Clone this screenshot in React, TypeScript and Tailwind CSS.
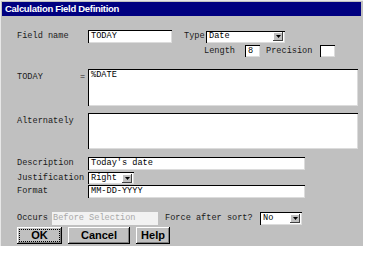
import React from "react";

const mono = { fontFamily: '"Liberation Mono", "Courier New", monospace' };
const sans = { fontFamily: '"Liberation Sans", Arial, sans-serif' };

function Field({ w, h = 13, children, className = "" }: { w: number; h?: number; children?: React.ReactNode; className?: string }) {
  return (
    <div
      className={`bg-white flex items-start pl-[3px] pt-[1px] leading-[11px] text-black shadow-[inset_1px_1px_0_#000,inset_-1px_-1px_0_#dcdcdc] ${className}`}
      style={{ width: w, height: h }}
    >
      {children}
    </div>
  );
}

function Arrow() {
  return (
    <div className="w-[10px] h-[9px] bg-[#c0c0c0] flex items-center justify-center shadow-[inset_-1px_-1px_0_#404040,inset_1px_1px_0_#fff]">
      <svg width="5" height="3" viewBox="0 0 5 3">
        <path d="M0 0 H5 L2.5 3 Z" fill="#000" />
      </svg>
    </div>
  );
}

function Select({ w, h = 12, value }: { w: number; h?: number; value: string }) {
  return (
    <div
      className="bg-white flex items-center justify-between pl-[3px] pr-[2px] leading-[11px] text-black shadow-[inset_1px_1px_0_#000,inset_-1px_-1px_0_#dcdcdc]"
      style={{ width: w, height: h }}
    >
      <span>{value}</span>
      <Arrow />
    </div>
  );
}

function Btn({ w, children, dotted }: { w: number; children: React.ReactNode; dotted?: boolean }) {
  return (
    <div
      className="h-[17px] bg-[#c0c0c0] flex items-center justify-center text-[11px] font-bold text-black shadow-[inset_-1px_-1px_0_#000,inset_1px_1px_0_#fff,inset_-2px_-2px_0_#808080]"
      style={{ width: w, ...sans }}
    >
      {dotted ? (
        <div className="w-[41px] h-[13px] border border-dotted border-black flex items-center justify-center">{children}</div>
      ) : (
        children
      )}
    </div>
  );
}

export default function App() {
  return (
    <div className="w-[369px] h-[253px] bg-white overflow-hidden">
      <div className="w-[363px] h-[246px] bg-[#c0c0c0] pt-[2px] text-[8.6px] text-[#1a1a1a] shadow-[inset_1px_1px_0_#e8e8e8]" style={mono}>
        <div className="mx-[2px] h-[14px] bg-[#000080] flex items-center pl-[3px]">
          <span className="text-white text-[9.5px] font-bold tracking-[-0.3px]" style={sans}>
            Calculation Field Definition
          </span>
        </div>

        <div className="pl-[17px]">
          {/* Row 1 */}
          <div className="flex items-center mt-[14px] h-[13px]">
            <span className="w-[71px]">Field name</span>
            <Field w={84}>TODAY</Field>
            <span className="ml-[12px] w-[22px]">Type</span>
            <Select w={79} h={12} value="Date" />
          </div>
          {/* Row 2 */}
          <div className="flex items-center mt-[2px] h-[12px] pl-[187px]">
            <span className="w-[41px]">Length</span>
            <Field w={15} h={12}>8</Field>
            <span className="ml-[6px] w-[54px]">Precision</span>
            <Field w={15} h={12} />
          </div>

          {/* Textarea 1 */}
          <div className="flex mt-[12px]">
            <span className="w-[63px] pt-[2px]">TODAY</span>
            <span className="w-[8px] pt-[2px]">=</span>
            <Field w={270} h={37}>%DATE</Field>
          </div>
          {/* Textarea 2 */}
          <div className="flex mt-[7px]">
            <span className="w-[71px] pt-[2px]">Alternately</span>
            <Field w={270} h={36} />
          </div>

          {/* Description */}
          <div className="flex items-center mt-[8px] h-[13px]">
            <span className="w-[71px]">Description</span>
            <Field w={217}>Today's date</Field>
          </div>
          <div className="flex items-center mt-[2px] h-[12px]">
            <span className="w-[71px]">Justification</span>
            <Select w={46} value="Right" />
          </div>
          <div className="flex items-center mt-[1px] h-[13px]">
            <span className="w-[71px]">Format</span>
            <Field w={217}>MM-DD-YYYY</Field>
          </div>

          {/* Occurs */}
          <div className="flex items-center mt-[14px] h-[13px]">
            <span className="w-[35px]">Occurs</span>
            <div className="w-[106px] h-[13px] bg-[#f2f2f2] text-[#a8a8a8] pl-[1px] flex items-center">Before Selection</div>
            <span className="ml-[7px] w-[95px]">Force after sort?</span>
            <Select w={42} h={13} value="No" />
          </div>

          {/* Buttons */}
          <div className="flex mt-[2px] gap-[6px]">
            <Btn w={45} dotted>OK</Btn>
            <Btn w={62}>Cancel</Btn>
            <Btn w={34}>Help</Btn>
          </div>
        </div>
      </div>
    </div>
  );
}
